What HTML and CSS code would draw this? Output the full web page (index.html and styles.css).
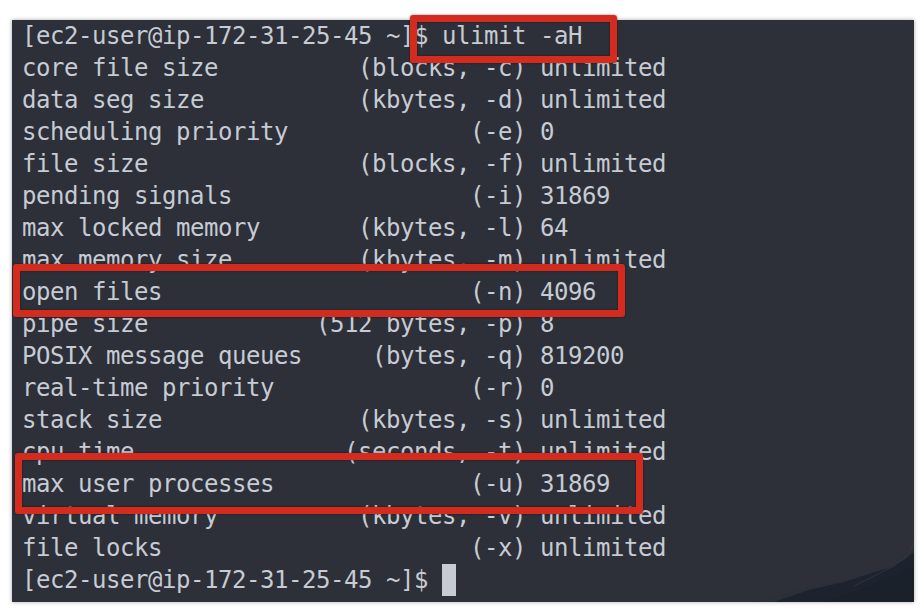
FILE: index.html
```html
<!DOCTYPE html>
<html>
<head>
<meta charset="utf-8">
<link rel="stylesheet" href="styles.css">
</head>
<body>
<div class="terminal">
  <svg class="mountain" width="160" height="120" viewBox="0 0 160 120" aria-hidden="true">
    <path d="M0 120 L30 112 L60 104 L90 100 L115 92 L135 84 L150 74 L160 66 L160 120 Z" fill="#2a2f38"/>
    <path d="M20 120 L55 108 L90 100 L115 92 L135 86 L150 78 L160 70 L160 120 Z" fill="#1c232e"/>
    <path d="M70 120 L100 110 L125 100 L145 92 L160 84 L160 120 Z" fill="#1a212b"/>
    <path d="M100 104 L120 94 L140 84 L155 72 L160 60" fill="none" stroke="#3a4350" stroke-width="1" opacity="0.5"/>
  </svg>
  <div class="lines">
    <div class="line">[ec2-user@ip-172-31-25-45 ~]$ ulimit -aH</div>
    <div class="line">core file size          (blocks, -c) unlimited</div>
    <div class="line">data seg size           (kbytes, -d) unlimited</div>
    <div class="line">scheduling priority             (-e) 0</div>
    <div class="line">file size               (blocks, -f) unlimited</div>
    <div class="line">pending signals                 (-i) 31869</div>
    <div class="line">max locked memory       (kbytes, -l) 64</div>
    <div class="line">max memory size         (kbytes, -m) unlimited</div>
    <div class="line">open files                      (-n) 4096</div>
    <div class="line">pipe size            (512 bytes, -p) 8</div>
    <div class="line">POSIX message queues     (bytes, -q) 819200</div>
    <div class="line">real-time priority              (-r) 0</div>
    <div class="line">stack size              (kbytes, -s) unlimited</div>
    <div class="line">cpu time               (seconds, -t) unlimited</div>
    <div class="line">max user processes              (-u) 31869</div>
    <div class="line">virtual memory          (kbytes, -v) unlimited</div>
    <div class="line">file locks                      (-x) unlimited</div>
    <div class="line">[ec2-user@ip-172-31-25-45 ~]$ <span class="cursor"> </span></div>
  </div>
  <div class="mark mark-cmd"></div>
  <div class="mark mark-files"></div>
  <div class="mark mark-procs"></div>
</div>
</body>
</html>
```
FILE: styles.css
```css
html, body {
  margin: 0;
  padding: 0;
  background: #ffffff;
}

body {
  width: 924px;
  height: 612px;
  overflow: hidden;
}

.terminal {
  position: relative;
  margin: 20px 0 0 12px;
  width: 902px;
  height: 582px;
  background: #2d3038;
  box-shadow: 0 0 4px rgba(0, 0, 0, 0.35);
}

.mountain {
  position: absolute;
  right: 0;
  bottom: 0;
}

.lines {
  position: relative;
  padding: 0 0 0 10px;
  font-family: "DejaVu Sans Mono", "Liberation Mono", monospace;
  font-size: 24px;
  letter-spacing: -0.45px;
  line-height: 32px;
  color: #c6cbd4;
}

.line {
  white-space: pre;
  height: 32px;
}

.cursor {
  display: inline-block;
  width: 14px;
  height: 32px;
  vertical-align: top;
  background: #c6cbd4;
}

.mark {
  position: absolute;
  box-sizing: border-box;
  border: 7px solid #d42b1f;
  border-radius: 3px;
  box-shadow: 0 0 2px rgba(0, 0, 0, 0.6), inset 0 0 2px rgba(0, 0, 0, 0.6);
}

.mark-cmd {
  left: 398px;
  top: -5px;
  width: 207px;
  height: 48px;
}

.mark-files {
  left: 1px;
  top: 244px;
  width: 612px;
  height: 53px;
}

.mark-procs {
  left: 3px;
  top: 433px;
  width: 628px;
  height: 61px;
}
```
